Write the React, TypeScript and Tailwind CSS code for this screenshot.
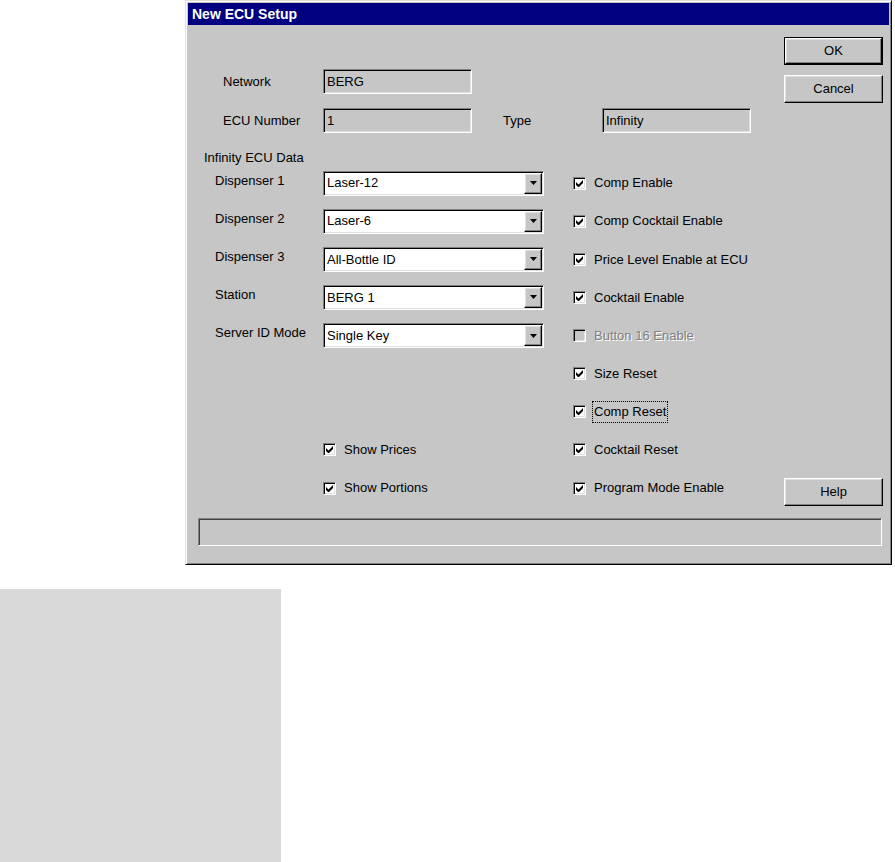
import React from 'react';

const sunken =
  'border border-t-[#808080] border-l-[#808080] border-b-white border-r-white shadow-[inset_1px_1px_0_#000,inset_-1px_-1px_0_#dfdfdf]';
const raised =
  'border border-t-white border-l-white border-b-black border-r-black shadow-[inset_-1px_-1px_0_#808080,inset_1px_1px_0_#dfdfdf]';

function ReadField({ value }: { value: string }) {
  return (
    <div className={`w-[149px] h-[25px] bg-[#c6c6c6] flex items-center pl-[3px] ${sunken}`}>
      <span className="leading-none">{value}</span>
    </div>
  );
}

function Combo({ value }: { value: string }) {
  return (
    <div className={`w-[221px] h-[25px] bg-white flex items-stretch p-[1px] ${sunken}`}>
      <span className="flex-1 flex items-center pl-[2px]">{value}</span>
      <span className={`w-[18px] bg-[#c6c6c6] flex items-center justify-center ${raised}`}>
        <svg width="7" height="4" viewBox="0 0 7 4">
          <path d="M0 0h7L3.5 4z" fill="#000" />
        </svg>
      </span>
    </div>
  );
}

function Check({
  label,
  checked = true,
  disabled = false,
  focused = false,
}: {
  label: string;
  checked?: boolean;
  disabled?: boolean;
  focused?: boolean;
}) {
  return (
    <div className="flex items-center gap-[8px]">
      <span
        className={`w-[13px] h-[13px] flex items-center justify-center ${sunken} ${
          disabled ? 'bg-[#c6c6c6]' : 'bg-white'
        }`}
      >
        {checked && (
          <svg width="7" height="7" viewBox="0 0 7 7">
            <path d="M0 2v3l2 2h1l4-4V0L2.5 4.5z" fill="#000" />
          </svg>
        )}
      </span>
      <span
        className={`${focused ? 'border border-dotted border-black px-[1px] -ml-[2px]' : ''} ${
          disabled ? 'text-[#808080] [text-shadow:1px_1px_0_#fff]' : ''
        }`}
      >
        {label}
      </span>
    </div>
  );
}

function Button({ label, isDefault = false }: { label: string; isDefault?: boolean }) {
  if (isDefault) {
    return (
      <div className="border border-black h-[28px] flex">
        <button className={`flex-1 bg-[#c6c6c6] ${raised}`}>{label}</button>
      </div>
    );
  }
  return <button className={`h-[28px] bg-[#c6c6c6] ${raised}`}>{label}</button>;
}

const rows: { left: React.ReactNode; right: React.ReactNode }[] = [
  { left: ['Dispenser 1', 'Laser-12'], right: <Check label="Comp Enable" /> },
  { left: ['Dispenser 2', 'Laser-6'], right: <Check label="Comp Cocktail Enable" /> },
  { left: ['Dispenser 3', 'All-Bottle ID'], right: <Check label="Price Level Enable at ECU" /> },
  { left: ['Station', 'BERG 1'], right: <Check label="Cocktail Enable" /> },
  { left: ['Server ID Mode', 'Single Key'], right: <Check label="Button 16 Enable" checked={false} disabled /> },
  { left: null, right: <Check label="Size Reset" /> },
  { left: null, right: <Check label="Comp Reset" focused /> },
  { left: <Check label="Show Prices" />, right: <Check label="Cocktail Reset" /> },
  { left: <Check label="Show Portions" />, right: <Check label="Program Mode Enable" /> },
];

export default function App() {
  return (
    <div className="w-[895px] h-[862px] bg-white font-['Liberation_Sans',Arial,sans-serif] text-[13px] text-black overflow-hidden">
      <div className="pl-[185px]">
        {/* dialog window */}
        <div className="w-[707px] h-[565px] bg-[#c6c6c6] p-[2px] border border-t-[#dfdfdf] border-l-[#dfdfdf] border-b-black border-r-black shadow-[inset_1px_1px_0_#fff,inset_-1px_-1px_0_#808080] flex flex-col">
          <div className="h-[22px] bg-[#000080] flex items-center pl-[4px] text-white font-bold text-[14px]">
            New ECU Setup
          </div>

          <div className="flex-1 flex flex-col pt-[2px]">
            <div className="h-[491px] flex">
              {/* main form */}
              <div className="w-[596px]">
                <div className="pt-[42px] pl-[35px] flex items-center h-[67px]">
                  <span className="w-[100px]">Network</span>
                  <ReadField value="BERG" />
                </div>
                <div className="mt-[14px] pl-[35px] flex items-center h-[25px]">
                  <span className="w-[100px]">ECU Number</span>
                  <ReadField value="1" />
                  <span className="ml-[31px] w-[99px]">Type</span>
                  <ReadField value="Infinity" />
                </div>
                <div className="mt-[18px] pl-[16px] h-[13px] leading-[13px]">Infinity ECU Data</div>

                <div className="flex flex-col">
                  {rows.map((row, i) => (
                    <div key={i} className="h-[38.125px] flex items-center">
                      <div className="w-[385px] flex items-center">
                        {Array.isArray(row.left) ? (
                          <div className="pl-[27px] flex items-center">
                            <span className="w-[108px] pb-[5px]">{row.left[0]}</span>
                            <Combo value={row.left[1]} />
                          </div>
                        ) : row.left ? (
                          <div className="pl-[135px]">{row.left}</div>
                        ) : null}
                      </div>
                      <div>{row.right}</div>
                    </div>
                  ))}
                </div>
              </div>

              {/* buttons */}
              <div className="w-[99px] flex flex-col pt-[10px]">
                <Button label="OK" isDefault />
                <div className="mt-[10px] flex flex-col">
                  <Button label="Cancel" />
                </div>
                <div className="mt-[375px] flex flex-col">
                  <Button label="Help" />
                </div>
              </div>
            </div>

            {/* status bar */}
            <div className={`ml-[10px] mr-[7px] h-[28px] ${sunken} shadow-[inset_1px_1px_0_#404040]`} />
          </div>
        </div>

        <div className="-ml-[185px] mt-[24px] w-[281px] h-[273px] bg-[#d9d9d9]" />
      </div>
    </div>
  );
}
